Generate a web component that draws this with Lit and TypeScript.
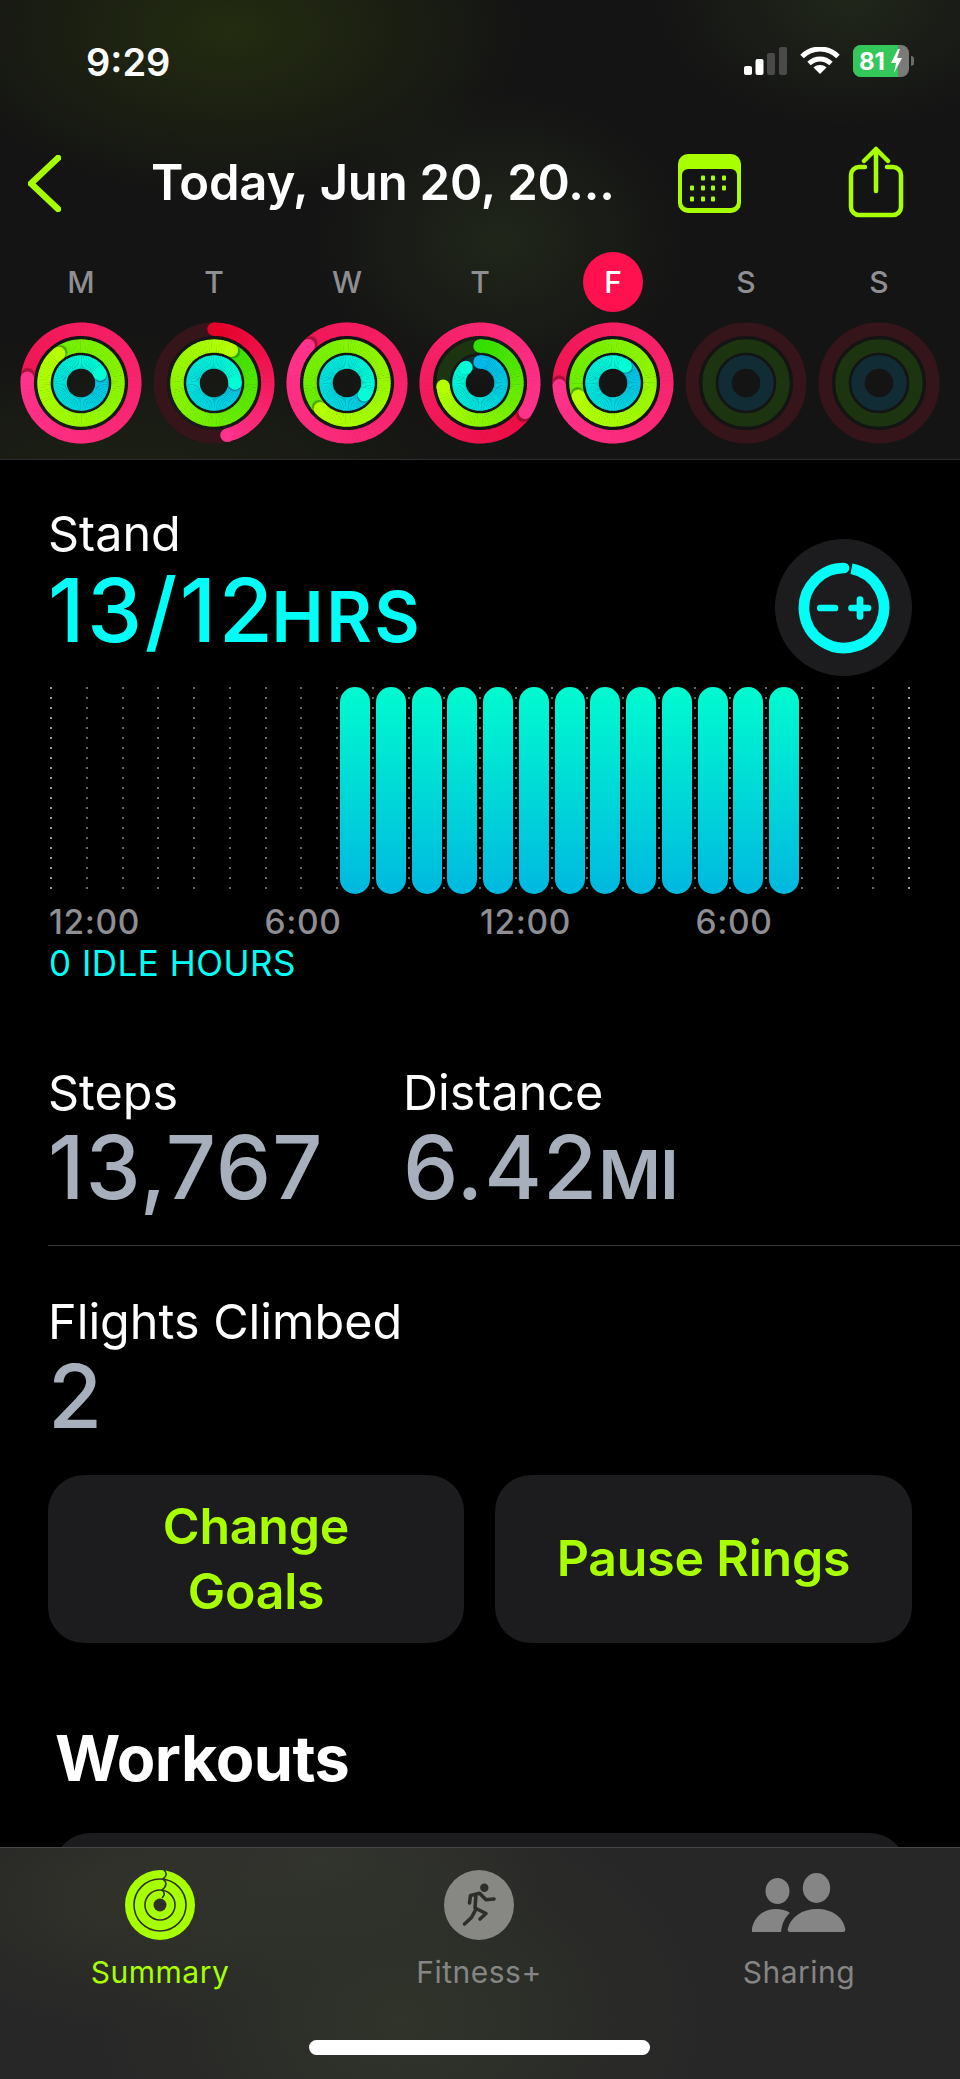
import { LitElement, html, css, svg } from 'lit';
import { customElement } from 'lit/decorators.js';

type Rgb = [number, number, number];

const MOVE: Rgb[] = [[229, 0, 40], [255, 51, 140]];
const EXERCISE: Rgb[] = [[52, 224, 0], [182, 255, 0]];
const STAND: Rgb[] = [[0, 184, 232], [0, 255, 214]];
const TRACKS = ['#35141a', '#1c3410', '#122c36'];
const RADII = [53.8, 37, 21];
const STROKE = 13.4;

// sweep of each ring in degrees, clockwise from 12 o'clock. over 360 means it lapped
const WEEK = [
  { day: 'M', rings: [635, 683, 425] },
  { day: 'T', rings: [166, 388, 450] },
  { day: 'W', rings: [674, 586, 484] },
  { day: 'T', rings: [483, 265, 318] },
  { day: 'F', rings: [627, 609, 396], today: true },
  { day: 'S', rings: [0, 0, 0] },
  { day: 'S', rings: [0, 0, 0] },
];

const CAL_DOTS = [
  [25, 24], [35, 24], [46, 24],
  [14, 34], [25, 34], [35, 34], [46, 34],
  [14, 45], [25, 45], [35, 45],
];

const mix = (ramp: Rgb[], t: number) => {
  const [a, b] = ramp;
  const c = a.map((v, i) => Math.round(v + (b[i] - v) * t));
  return `rgb(${c[0]},${c[1]},${c[2]})`;
};

const pt = (r: number, deg: number) => {
  const rad = (deg * Math.PI) / 180;
  return [r * Math.sin(rad), -r * Math.cos(rad)];
};

function ring(r: number, sweep: number, ramp: Rgb[], track: string) {
  const parts = [svg`<circle r=${r} fill="none" stroke=${track} stroke-width=${STROKE}></circle>`];
  if (!sweep) return parts;
  const from = Math.max(0, sweep - 360);
  const step = 4;
  const arcs = [];
  for (let a = from; a < sweep; a += step) {
    const end = Math.min(a + step + 0.6, sweep);
    const [x1, y1] = pt(r, a);
    const [x2, y2] = pt(r, end);
    arcs.push(svg`<path d="M${x1} ${y1}A${r} ${r} 0 0 1 ${x2} ${y2}" fill="none" stroke=${mix(ramp, a / sweep)} stroke-width=${STROKE}></path>`);
  }
  if (sweep <= 360) {
    const [sx, sy] = pt(r, 0);
    parts.push(svg`<circle cx=${sx} cy=${sy} r=${STROKE / 2} fill=${mix(ramp, 0)}></circle>`);
  }
  // soft shadow the head throws on the lap underneath
  const [dx, dy] = pt(r, sweep + 4);
  const head = pt(r, sweep);
  const cut = Math.max(0, arcs.length - 6);
  parts.push(...arcs.slice(0, cut));
  if (sweep > 360) parts.push(svg`<circle cx=${dx} cy=${dy} r=${STROKE / 2} fill="rgba(0,0,0,.28)"></circle>`);
  parts.push(...arcs.slice(cut));
  parts.push(svg`<circle cx=${head[0]} cy=${head[1]} r=${STROKE / 2} fill=${mix(ramp, 1)}></circle>`);
  return parts;
}

@customElement('app-root')
export class AppRoot extends LitElement {
  static styles = css`
    :host {
      display: block;
      font-family: Inter, 'Noto Sans', sans-serif;
      color: #fff;
    }
    .screen {
      width: 960px;
      height: 2079px;
      background: #000;
      display: flex;
      flex-direction: column;
      overflow: hidden;
    }

    /* header */
    .top {
      height: 459px;
      flex: none;
      border-bottom: 1px solid #2c2c2e;
      background:
        radial-gradient(300px 170px at 230px 30px, #232c10, transparent),
        radial-gradient(200px 130px at 850px 0px, #20261a, transparent),
        radial-gradient(190px 150px at 500px 240px, #20261a, transparent),
        radial-gradient(400px 140px at 130px 470px, #1c2014, transparent),
        #141414;
    }
    .status {
      display: flex;
      align-items: center;
      height: 32px;
      padding: 45px 46px 0 86px;
    }
    .clock {
      font-size: 38px;
      font-weight: 600;
      line-height: 34px;
      width: 658px;
      padding-top: 2px;
    }
    .status svg {
      display: block;
    }
    .status .wifi {
      margin-left: 13px;
    }
    .status .batt {
      margin-left: 13px;
    }
    .nav {
      display: flex;
      align-items: flex-start;
      height: 72px;
      padding: 69px 0 0 28px;
    }
    .nav svg {
      display: block;
      flex: none;
    }
    .nav .back {
      margin-top: 9px;
    }
    .title {
      width: 526px;
      margin-left: 90px;
      margin-right: 1px;
      font-size: 49px;
      font-weight: 600;
      line-height: 60px;
      margin-top: 7px;
      white-space: nowrap;
      letter-spacing: -0.2px;
    }
    .nav .cal {
      margin-top: 8px;
    }
    .nav .share {
      margin-left: 107px;
    }
    .week {
      display: grid;
      grid-template-columns: repeat(7, 133px);
      padding: 34px 0 0 14.500px;
    }
    .day {
      display: flex;
      flex-direction: column;
      align-items: center;
    }
    .letter {
      width: 60px;
      height: 60px;
      border-radius: 50%;
      display: flex;
      align-items: center;
      justify-content: center;
      font-size: 30px;
      font-weight: 500;
      color: #8e8e93;
    }
    .letter.today {
      background: #ff1150;
      color: #fff;
    }
    .day svg {
      display: block;
      margin-top: 10px;
    }

    /* body */
    main {
      flex: 1;
      min-height: 0;
      overflow: hidden;
    }
    .stand {
      display: flex;
      justify-content: space-between;
      padding: 46px 48px 0 48px;
      height: 181px;
    }
    .label {
      font-size: 48.500px;
      line-height: 56px;
      font-weight: 400;
    }
    .value {
      font-size: 88px;
      line-height: 76px;
      font-weight: 500;
    }
    .value small {
      font-size: 68px;
      font-weight: 600;
      letter-spacing: -1px;
    }
    .stand .value {
      margin-top: 10px;
      letter-spacing: 2.500px;
    }
    .stand .value small {
      font-size: 70px;
      margin-left: -4px;
      letter-spacing: 2.500px;
    }
    .cyan {
      color: #00fff6;
    }
    .goal {
      width: 137px;
      height: 137px;
      border-radius: 50%;
      background: #1c1c1e;
      display: flex;
      align-items: center;
      justify-content: center;
      margin-top: 33px;
    }
    .chart {
      display: grid;
      margin: 0 0 0 50px;
      width: 870px;
      height: 207px;
    }
    .chart > * {
      grid-area: 1 / 1;
    }
    .bars {
      display: flex;
      gap: 5.750px;
      padding-left: 290px;
    }
    .bars i {
      width: 30px;
      height: 207px;
      border-radius: 15px;
      background: linear-gradient(#00fbcf, #00b8e0);
    }
    .hours {
      display: grid;
      grid-template-columns: repeat(4, 215.500px);
      margin: 8px 0 0 49px;
      font-size: 33.500px;
      line-height: 40px;
      font-weight: 500;
      letter-spacing: 0.600px;
      color: #8e8e93;
    }
    .idle {
      margin-left: 49px;
      font-size: 35px;
      line-height: 42px;
      letter-spacing: 0.500px;
      color: #00fff6;
    }
    .stats {
      display: flex;
      padding: 81px 0 0 48px;
    }
    .stats > div {
      width: 355px;
    }
    .grey {
      color: #a7aebc;
    }
    .stats .value {
      line-height: 80px;
      margin-top: 5.500px;
      letter-spacing: 1px;
    }
    .flights .value {
      line-height: 80px;
      margin-top: 6px;
    }
    .rule {
      margin: 31px 0 0 48px;
      height: 1px;
      background: #3a3a3c;
    }
    .flights {
      padding: 48px 0 0 48px;
    }
    .actions {
      display: grid;
      grid-template-columns: 416px 417px;
      gap: 31px;
      margin: 39px 0 0 48px;
    }
    .btn {
      height: 168px;
      border-radius: 36px;
      background: #1c1c1e;
      display: flex;
      align-items: center;
      justify-content: center;
      text-align: center;
      color: #a8ff00;
      font-size: 50px;
      font-weight: 600;
      line-height: 65px;
      letter-spacing: -0.2px;
    }
    h2 {
      margin: 78px 0 0 55px;
      font-size: 63px;
      line-height: 74px;
      font-weight: 700;
      letter-spacing: -0.5px;
    }
    .card {
      margin: 38px 54px 0;
      height: 200px;
      border-radius: 36px;
      background: #1c1c1e;
    }

    /* tab bar */
    .tabs {
      flex: none;
      height: 231px;
      border-top: 1px solid #46474a;
      background:
        radial-gradient(300px 220px at 400px 170px, #30342a, transparent),
        radial-gradient(240px 120px at 320px 10px, #33342f, transparent),
        radial-gradient(220px 130px at 130px 50px, #31332a, transparent),
        #272727;
      display: grid;
      grid-template-columns: 320px 318px 322px;
      grid-template-rows: 192px 15px;
      text-align: center;
    }
    .tab {
      display: flex;
      flex-direction: column;
      align-items: center;
      padding-top: 22px;
      font-size: 30px;
      line-height: 40px;
      font-weight: 400;
      letter-spacing: 0.500px;
      color: #858585;
    }
    .tab svg {
      display: block;
      height: 70px;
      margin-bottom: 12px;
    }
    .tab.on {
      color: #a8ff00;
    }
    .homebar {
      grid-column: 1 / -1;
      width: 341px;
      height: 15px;
      border-radius: 8px;
      background: #fff;
      margin: 0 0 0 309px;
    }
  `;

  renderDots() {
    const dots = [];
    for (let c = 0; c < 25; c++) {
      for (let r = 0; r < 21; r++) {
        const fill = c === 0 || c === 24 ? '#a0a0a0' : '#666';
        dots.push(svg`<rect x=${Math.round(35.75 * c)} y=${r * 10} width="2" height="2" fill=${fill}></rect>`);
      }
    }
    return html`<svg width="870" height="207">${dots}</svg>`;
  }

  renderRings(rings: number[]) {
    return html`<svg width="122" height="122" viewBox="-61 -61 122 122">
      ${ring(RADII[0], rings[0], MOVE, TRACKS[0])}
      ${ring(RADII[1], rings[1], EXERCISE, TRACKS[1])}
      ${ring(RADII[2], rings[2], STAND, TRACKS[2])}
    </svg>`;
  }

  renderHeader() {
    return html`<header class="top">
      <div class="status">
        <div class="clock">9:29</div>
        <svg width="43" height="28" viewBox="0 0 43 28">
          <rect x="0" y="19" width="8" height="9" rx="2" fill="#fff"></rect>
          <rect x="11.500" y="12" width="8" height="16" rx="2" fill="#fff"></rect>
          <rect x="23" y="6" width="8" height="22" rx="2" fill="#4a4a4a"></rect>
          <rect x="35" y="0" width="8" height="28" rx="2" fill="#4a4a4a"></rect>
        </svg>
        <svg class="wifi" width="40" height="28" viewBox="0 0 40 28" fill="none" stroke="#fff" stroke-width="5">
          <path d="M2 9.500C12-.5 28-.5 38 9.500"></path>
          <path d="M9 16.500c6.500-6 15.500-6 22 0"></path>
          <path d="M20 27l-6.500-6.500c3.500-3.300 9.500-3.300 13 0z" fill="#fff" stroke="none"></path>
        </svg>
        <svg class="batt" width="61" height="32" viewBox="0 0 61 32">
          <rect width="56" height="32" rx="8" fill="#7a7a78"></rect>
          <path d="M8 0h37v32H8a8 8 0 0 1-8-8V8a8 8 0 0 1 8-8z" fill="#34c759"></path>
          <path d="M58 11a4 5 0 0 1 0 10z" fill="#6a6a68"></path>
          <text x="6" y="25" font-size="24" font-weight="700" fill="#fff" font-family="Inter, sans-serif">81</text>
          <path d="M45 4l-7 14h5l-2 10 8-15h-5l3-9z" fill="#fff"></path>
        </svg>
      </div>
      <div class="nav">
        <svg class="back" width="33" height="57" viewBox="0 0 33 57" fill="none" stroke="#a8ff00" stroke-width="6.500" stroke-linecap="round" stroke-linejoin="round">
          <path d="M30 3L3 28.500 30 54"></path>
        </svg>
        <div class="title">Today, Jun 20, 20...</div>
        <svg class="cal" width="63" height="59" viewBox="0 0 63 59">
          <path d="M10 0h43a10 10 0 0 1 10 10v39a10 10 0 0 1-10 10H10A10 10 0 0 1 0 49V10A10 10 0 0 1 10 0zm0 15a6 6 0 0 0-6 6v27a6 6 0 0 0 6 6h43a6 6 0 0 0 6-6V21a6 6 0 0 0-6-6z" fill="#a8ff00" fill-rule="evenodd"></path>
          <g fill="#a8ff00">
            ${CAL_DOTS.map(([x, y]) => svg`<rect x=${x - 2} y=${y - 2.5} width="4" height="5" rx="1"></rect>`)}
          </g>
        </svg>
        <svg class="share" width="56" height="72" viewBox="0 0 56 72" fill="none" stroke="#a8ff00" stroke-width="4.500" stroke-linecap="round" stroke-linejoin="round">
          <path d="M17 21H11a8 8 0 0 0-8 8v32a8 8 0 0 0 8 8h34a8 8 0 0 0 8-8V29a8 8 0 0 0-8-8h-6"></path>
          <path d="M28 45V3M16 15L28 3l12 12"></path>
        </svg>
      </div>
      <div class="week">
        ${WEEK.map(
          (d) => html`<div class="day">
            <div class="letter ${d.today ? 'today' : ''}">${d.day}</div>
            ${this.renderRings(d.rings)}
          </div>`
        )}
      </div>
    </header>`;
  }

  renderBody() {
    return html`<main>
      <section class="stand">
        <div>
          <div class="label">Stand</div>
          <div class="value cyan">13/12<small>HRS</small></div>
        </div>
        <div class="goal">
          <svg width="92" height="92" viewBox="-46 -46 92 92" fill="none" stroke="#00fff6" stroke-linecap="round">
            <path d="M7.500-39.300A40 40 0 1 1-28.300-28.300" stroke-width="10.700" stroke-linecap="butt"></path>
            <path d="M-28.300-28.300A40 40 0 0 1 0-40" stroke-width="10.700"></path>
            <path d="M-23.700 0H-9M7.500 0H24M16-8.500V8.500" stroke-width="6.700"></path>
          </svg>
        </div>
      </section>
      <div class="chart">
        ${this.renderDots()}
        <div class="bars">${Array.from({ length: 13 }, () => html`<i></i>`)}</div>
      </div>
      <div class="hours"><span>12:00</span><span>6:00</span><span>12:00</span><span>6:00</span></div>
      <div class="idle">0 IDLE HOURS</div>
      <section class="stats">
        <div>
          <div class="label">Steps</div>
          <div class="value grey">13,767</div>
        </div>
        <div>
          <div class="label">Distance</div>
          <div class="value grey">6.42<small>MI</small></div>
        </div>
      </section>
      <div class="rule"></div>
      <section class="flights">
        <div class="label">Flights Climbed</div>
        <div class="value grey">2</div>
      </section>
      <div class="actions">
        <div class="btn">Change<br />Goals</div>
        <div class="btn">Pause Rings</div>
      </div>
      <h2>Workouts</h2>
      <div class="card"></div>
    </main>`;
  }

  renderTabs() {
    return html`<nav class="tabs">
      <div class="tab on">
        <svg width="70" height="70" viewBox="-35 -35 70 70">
          <circle r="35" fill="#a8ff00"></circle>
          <g fill="none" stroke="#2f3128" stroke-width="1.600">
            <circle r="26"></circle>
            <circle r="15"></circle>
            <path d="M4-35c3 3 3 6-1 9c4 3 4 7-1 11c3 3 3 5 0 8"></path>
          </g>
          <circle r="6.500" fill="#2f3128"></circle>
        </svg>
        Summary
      </div>
      <div class="tab">
        <svg width="70" height="70" viewBox="-35 -35 70 70">
          <circle r="35" fill="#878884"></circle>
          <circle cx="5.300" cy="-17.300" r="4.200" fill="#2d2e2b"></circle>
          <path d="M-9.500-2l1-7.500 9-2.200 6.500 6.500 8-.8M-3-11l-1 14 11 5.500-6 5.500M-3.500 5l-4 7.500-7 6.500" fill="none" stroke="#2d2e2b" stroke-width="3.600" stroke-linecap="round" stroke-linejoin="round"></path>
        </svg>
        Fitness+
      </div>
      <div class="tab">
        <svg width="94" height="70" viewBox="0 0 94 70" fill="#858585">
          <ellipse cx="25.500" cy="21" rx="12" ry="13"></ellipse>
          <ellipse cx="64.500" cy="18" rx="13.700" ry="15"></ellipse>
          <path d="M1 62c-2 0-2-2-1-4 3-12 12-19 24-19 5 0 10 1 14 4-5 4-8 10-9 19z"></path>
          <path d="M38 62c-2 0-3-2-2-4 3-11 14-19 29-19s26 8 28 19c1 2 0 4-2 4z"></path>
        </svg>
        Sharing
      </div>
      <div class="homebar"></div>
    </nav>`;
  }

  render() {
    return html`<div class="screen">${this.renderHeader()}${this.renderBody()}${this.renderTabs()}</div>`;
  }
}
